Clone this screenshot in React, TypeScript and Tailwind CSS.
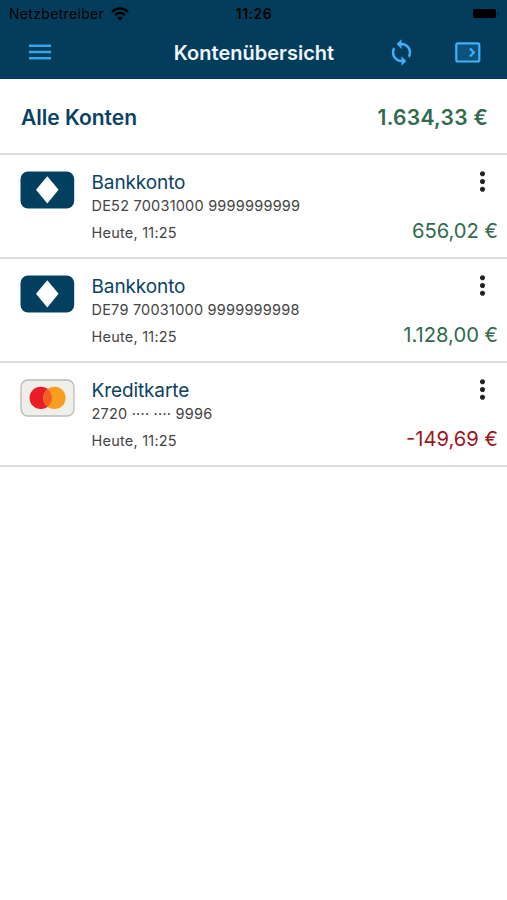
import { clsx } from "clsx"
import { MdMoreVert, MdSync } from "react-icons/md"

interface Account {
  id: string
  type: "bank" | "card"
  name: string
  number: string
  updated: string
  balance: string
  negative?: boolean
}

const accounts: Account[] = [
  { id: "giro-1", type: "bank", name: "Bankkonto", number: "DE52 70031000 9999999999", updated: "Heute, 11:25", balance: "656,02 €" },
  { id: "giro-2", type: "bank", name: "Bankkonto", number: "DE79 70031000 9999999998", updated: "Heute, 11:25", balance: "1.128,00 €" },
  { id: "card-1", type: "card", name: "Kreditkarte", number: "2720 ···· ···· 9996", updated: "Heute, 11:25", balance: "-149,69 €", negative: true },
]

function WifiIcon() {
  return (
    <svg className="h-[14px] w-[18px] overflow-visible" viewBox="0 0 18 14" fill="none" stroke="currentColor" strokeWidth="2.5">
      <path d="M1 4C5.3-.6 12.7-.6 17 4" />
      <path d="M4.1 7.2c2.7-2.8 7.1-2.8 9.8 0" />
      <path d="M9 12.7 6.2 9.8c1.5-1.5 4.1-1.5 5.6 0z" fill="currentColor" stroke="none" />
    </svg>
  )
}

function StatusBar() {
  return (
    <div className="grid h-[26px] grid-cols-3 items-center pt-[3px] text-black">
      <div className="flex items-center gap-[6.5px] pl-[9px]">
        <span className="text-[13.8px] leading-none tracking-[0.43px]">Netzbetreiber</span>
        <WifiIcon />
      </div>
      <span className="pl-px text-center text-[13.8px] leading-none font-semibold tracking-[0.6px]">11:26</span>
      <div className="flex items-center justify-end gap-px pr-[8px] pb-[3px]">
        <span className="h-[9px] w-[23px] rounded-[2px] bg-black" />
        <span className="h-[3px] w-[2px] rounded-r-full bg-black/40" />
      </div>
    </div>
  )
}

function Header() {
  return (
    <header className="h-[79px] bg-[#033d5b]">
      <StatusBar />
      <div className="grid h-[52px] grid-cols-[120px_1fr_120px] items-center">
        <button className="ml-[29px] w-[22px] text-[#38a3ea]" aria-label="Menü">
          <svg className="h-[16px] w-[22px]" viewBox="0 0 22 16" stroke="currentColor" strokeWidth="2.5">
            <path d="M0 1.7h22M0 8h22M0 14.3h22" />
          </svg>
        </button>
        <h1 className="pt-[2px] pl-px text-center text-[20px] leading-none font-semibold whitespace-nowrap text-[#eef6fb]">Kontenübersicht</h1>
        <div className="flex items-center">
          <button className="text-[#41affa]" aria-label="Aktualisieren">
            <MdSync className="size-[29px]" />
          </button>
          <button className="ml-[39px]" aria-label="Umsätze">
            <svg className="h-[21px] w-[26px]" viewBox="0 0 26 21" fill="none" stroke="#41affa">
              <rect x="1.3" y="1.3" width="23" height="18.2" rx="1.6" strokeWidth="2.2" fill="#0b527d" />
              <path d="m15 6.4 3.8 4-3.8 4" strokeWidth="2.2" />
            </svg>
          </button>
        </div>
      </div>
    </header>
  )
}

function AccountLogo({ type }: { type: Account["type"] }) {
  if (type === "card") {
    return (
      <svg className="h-[38px] w-[55px]" viewBox="0 0 55 38">
        <rect x="1" y="1" width="53" height="36" rx="7" fill="#efeeeb" stroke="#bcbcbc" strokeWidth="1.3" />
        <circle cx="20.8" cy="18.9" r="11.2" fill="#ea1c27" />
        <circle cx="34.4" cy="18.9" r="11.2" fill="#f89e1f" />
        <path d="M27.6 10a11.2 11.2 0 0 1 0 17.8 11.2 11.2 0 0 1 0-17.8z" fill="#f16022" />
      </svg>
    )
  }
  return (
    <svg className="h-[38px] w-[55px]" viewBox="0 0 55 38">
      <rect x="0.5" y="0.5" width="53.7" height="37" rx="7.5" fill="#033f5e" />
      <path d="m27.3 5.2 11.3 13.6-11.3 13.8L16 18.8z" fill="#fff" />
    </svg>
  )
}

function AccountRow({ account }: { account: Account }) {
  return (
    <li className="flex h-[104px] border-b-2 border-[#dddddd] pl-5">
      <div className="pt-[16px]">
        <AccountLogo type={account.type} />
      </div>
      <div className="ml-[16.5px] flex-1 pt-[16px] whitespace-nowrap text-[#444444]">
        <h2 className="text-[19px] leading-[23px] tracking-[-0.1px] text-[#0a4262]">{account.name}</h2>
        <p className="text-[14.5px] leading-[24px] tracking-[0.22px]">{account.number}</p>
        <p className="mt-[3px] text-[14.5px] leading-[24px] tracking-[0.22px]">{account.updated}</p>
      </div>
      <div className="flex flex-col items-end pt-[11px] pr-[9px] whitespace-nowrap">
        <button className="text-[#222222]" aria-label="Mehr">
          <MdMoreVert className="size-[31px]" />
        </button>
        <span className={clsx("mt-[20px] text-[20.2px] leading-[28px]", account.negative ? "text-[#9c1520]" : "text-[#2f6b4c]")}>
          {account.balance}
        </span>
      </div>
    </li>
  )
}

export default function App() {
  return (
    <div className="min-h-[900px] w-[507px] bg-white font-[Inter,sans-serif]">
      <Header />
      <main>
        <div className="flex h-[76px] items-center justify-between border-b-2 border-[#dddddd] pt-[4px] pr-[19px] pl-[21px] text-[21px] font-semibold">
          <span className="text-[#0a4262]">Alle Konten</span>
          <span className="tracking-[0.3px] text-[#2f6b4c]">1.634,33 €</span>
        </div>
        <ul>
          {accounts.map((account) => (
            <AccountRow key={account.id} account={account} />
          ))}
        </ul>
      </main>
    </div>
  )
}
